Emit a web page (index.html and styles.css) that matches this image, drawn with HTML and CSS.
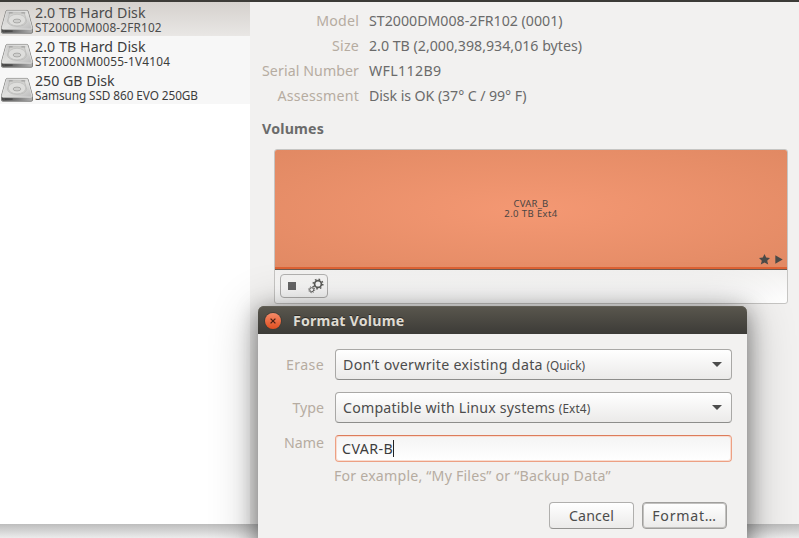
FILE: index.html
```html
<!DOCTYPE html>
<html lang="en">
<head>
<meta charset="utf-8">
<title>Disks</title>
<link rel="stylesheet" href="styles.css">
</head>
<body>
<svg class="defs" width="0" height="0" aria-hidden="true">
  <defs>
    <linearGradient id="lid" x1="0" y1="0" x2="1" y2="1">
      <stop offset="0" stop-color="#c4c4c4"/><stop offset=".5" stop-color="#e0e0de"/><stop offset="1" stop-color="#bababa"/>
    </linearGradient>
    <linearGradient id="front" x1="0" y1="0" x2="1" y2="0">
      <stop offset="0" stop-color="#4a4a4a"/><stop offset=".5" stop-color="#777"/><stop offset="1" stop-color="#b0b0b0"/>
    </linearGradient>
    <symbol id="drive" viewBox="0 0 33 26" preserveAspectRatio="none">
      <path d="M6.500 1.500h20q1 0 1.400 1l4.600 17v4.500q0 1.200-1.200 1.200H1.700Q.5 25.200.5 24v-4.500L5.100 2.500q.4-1 1.400-1z" fill="#999" stroke="#7c7c7a"/>
      <path d="M1 20.500h31v2.700q0 1.500-1.200 1.500H2.200Q1 24.700 1 23.200z" fill="url(#front)"/>
      <path d="M6.800 2h19.400q.9 0 1.200.9L32 20q0 1-1 1H2q-1 0-1-1L5.600 2.900q.3-.9 1.200-.9z" fill="url(#lid)" stroke="#efefed" stroke-width=".7"/>
      <path d="M9 4h15l2.500 9q-2 5-10 5t-10-5z" fill="#d2d2d0" stroke="#b0b0ae" stroke-width=".6"/>
      <ellipse cx="16.500" cy="11.500" rx="9" ry="6" fill="#dededc" stroke="#b6b6b4" stroke-width=".6"/>
      <ellipse cx="16.500" cy="12.500" rx="4" ry="2" fill="#cfcfcd" stroke="#969694" stroke-width=".7"/>
      <path d="M8 4h4M21 4h4" stroke="#8c8c8c" stroke-width=".8"/>
      <path d="M4 23h8" stroke="#3a3a3a"/>
    </symbol>
  </defs>
</svg>
<div class="window">
  <aside class="sidebar">
    <div class="disk selected"><svg class="drive"><use href="#drive"/></svg><div><div class="name"><span class="n1">2.0 TB Hard Disk</span></div><div class="model"><span class="m1">ST2000DM008-2FR102</span></div></div></div>
    <div class="disk"><svg class="drive"><use href="#drive"/></svg><div><div class="name"><span class="n1">2.0 TB Hard Disk</span></div><div class="model"><span class="m2">ST2000NM0055-1V4104</span></div></div></div>
    <div class="disk"><svg class="drive"><use href="#drive"/></svg><div><div class="name"><span class="n3">250 GB Disk</span></div><div class="model"><span class="m3">Samsung SSD 860 EVO 250GB</span></div></div></div>
  </aside>
  <main class="details">
    <dl class="info">
      <dt><span class="l1">Model</span></dt><dd><span class="v1">ST2000DM008-2FR102 (0001)</span></dd>
      <dt><span class="l2">Size</span></dt><dd><span class="v2">2.0 TB (2,000,398,934,016 bytes)</span></dd>
      <dt><span class="l3">Serial Number</span></dt><dd><span class="v3">WFL112B9</span></dd>
      <dt><span class="l4">Assessment</span></dt><dd><span class="v4">Disk is OK (37° C / 99° F)</span></dd>
    </dl>
    <h2><span class="vol-h">Volumes</span></h2>
    <section class="volumes">
      <div class="volume">
        <div class="vol-label"><span class="c1">CVAR_B</span><br><span class="c2">2.0 TB Ext4</span></div>
        <div class="flags">
          <svg width="11" height="11" viewBox="0 0 11 11"><path d="M5.500 0 7.200 3.600 11 4 8.200 6.700 9.200 10.600 5.500 8.600 1.800 10.600 2.800 6.700 0 4 3.800 3.600z"/></svg>
          <svg width="8" height="9" viewBox="0 0 8 9"><path d="M.3.300 7.700 4.500.3 8.700z"/></svg>
        </div>
      </div>
      <div class="toolbar">
        <div class="group">
          <i class="stop"></i>
          <svg width="16" height="16" viewBox="0 0 16 16" fill="none" stroke="#5c5c59">
            <circle cx="10" cy="6" r="3.400" stroke-width="1.700"/>
            <circle cx="10" cy="6" r="4.800" stroke-width="1.500" stroke-dasharray="1.600 2.170"/>
            <circle cx="3.700" cy="11.700" r="2" stroke-width="1"/>
            <circle cx="3.700" cy="11.700" r="3" stroke-width="1" stroke-dasharray="1.100 1.256"/>
          </svg>
        </div>
      </div>
    </section>
  </main>
</div>
<div class="dialog">
  <header class="titlebar">
    <span class="close"><svg width="6" height="6" viewBox="0 0 6 6"><path d="M.6.600 5.400 5.400M5.400.6.600 5.400" stroke="#4a2015" stroke-width="1.300"/></svg></span>
    <span class="title">Format Volume</span>
  </header>
  <div class="form">
    <label><span class="f1">Erase</span></label>
    <div class="combo"><span><span class="o1">Don’t overwrite existing data</span> <small class="s1">(Quick)</small></span><i class="arrow"></i></div>
    <label><span class="f2">Type</span></label>
    <div class="combo"><span><span class="o2">Compatible with Linux systems</span> <small class="s2">(Ext4)</small></span><i class="arrow"></i></div>
    <label class="top"><span class="f3">Name</span></label>
    <div class="entry"><span class="e1">CVAR-B</span><i class="caret"></i></div>
    <p class="hint"><span class="h1">For example, “My Files” or “Backup Data”</span></p>
  </div>
  <div class="actions">
    <button><span class="b1">Cancel</span></button>
    <button class="default"><span class="b2">Format…</span></button>
  </div>
</div>
</body>
</html>
```
FILE: styles.css
```css
* { box-sizing: border-box; }
body {
  margin: 0;
  width: 799px;
  height: 538px;
  overflow: hidden;
  position: relative;
  background: linear-gradient(#bdbdbd, #ececec) 0 524px / 100% 14px no-repeat #ececec;
  font: 14.2px/20px "Noto Sans", "Open Sans", sans-serif;
  color: #4c4c4c;
  white-space: nowrap;
}
.defs { position: absolute; }
.window {
  display: flex;
  height: 524px;
  border-top: 2px solid #3c3b37;
  background: #f2f1f0;
}
.sidebar { width: 250px; background: #fff; }
.disk {
  display: flex;
  gap: 2px;
  height: 34px;
  padding: 2px 0 0 1px;
  background: #f7f7f7;
  color: #3c3c3c;
}
.disk.selected { background: linear-gradient(#d5d1cd, #e9e7e5); color: #4c4c4c; }
.drive { width: 32px; height: 25px; margin-top: 5px; }
.name { height: 17px; line-height: 18px; }
.model { height: 15px; font-size: 11.8px; line-height: 13px; }
.details { flex: 1; padding: 6px 11px 0 12px; color: #6b6b6b; }
.info {
  display: grid;
  grid-template-columns: 97px auto;
  column-gap: 10px;
  grid-auto-rows: 25px;
  line-height: 25px;
  margin: 0;
}
dt { text-align: right; color: #b6aca1; }
dd { margin: 0; }
h2 { margin: 9px 0 0; font-size: 14.2px; line-height: 24px; }
.volumes {
  margin: 8px 0 0 12px;
  height: 155px;
  border: 1px solid #c6c5c3;
  border-radius: 3px;
  background: linear-gradient(#f2f1f0 120px, #fff);
}
.volume {
  height: 120px;
  display: flex;
  flex-direction: column;
  justify-content: center;
  position: relative;
  border-bottom: 1px solid #6d5a50;
  box-shadow: inset 0 -2px #dd6234;
  border-radius: 2px 2px 0 0;
  background: radial-gradient(ellipse farthest-corner, #f49873, #e18963);
}
.vol-label { margin-top: -2px; font-size: 9.5px; line-height: 10px; text-align: center; color: #4a4542; }
.flags {
  position: absolute;
  right: 4px;
  bottom: 4px;
  display: flex;
  align-items: center;
  gap: 5px;
  fill: #4a4a48;
}
.toolbar { padding: 4px 5px; }
.group {
  width: 48px;
  height: 24px;
  display: flex;
  align-items: center;
  gap: 12px;
  padding-left: 7px;
  border: 1px solid #b2b1b0;
  border-radius: 4px;
}
.stop { width: 8px; height: 8px; background: #666; }
.dialog {
  position: absolute;
  left: 258px;
  top: 306px;
  width: 489px;
  height: 250px;
  border-radius: 6px 6px 0 0;
  background: #f2f1f0;
  box-shadow: 0 6px 48px rgba(0,0,0,.3), 0 4px 22px rgba(0,0,0,.4);
}
.titlebar {
  height: 28px;
  display: flex;
  align-items: center;
  gap: 12px;
  padding: 1px 0 0 7px;
  border-radius: 6px 6px 0 0;
  background: linear-gradient(#5a574e, #3c3b37);
  box-shadow: inset 0 1px #625f56;
}
.close {
  width: 16px;
  height: 16px;
  display: grid;
  place-items: center;
  border-radius: 50%;
  background: linear-gradient(#f48a68, #e14f20);
  box-shadow: 0 0 0 1px #403e38;
}
.title { font-weight: bold; color: #dfdbd2; text-shadow: 0 -1px #2c2b27; }
.form {
  display: grid;
  grid-template-columns: 66px 397px;
  grid-template-rows: 31px 31px 27px 20px;
  column-gap: 11px;
  row-gap: 12px;
  padding-top: 15px;
}
label { text-align: right; color: #b6aca1; line-height: 31px; }
label.top { line-height: 16px; }
.combo {
  display: flex;
  align-items: center;
  justify-content: space-between;
  padding: 0 9px 0 7px;
  border: 1px solid #a9a8a6;
  border-bottom-color: #8d8d8b;
  border-radius: 4px;
  background: linear-gradient(#fff, #ebeae9);
}
small { font-size: 11.8px; }
.arrow { border: 5px solid transparent; border-top: 5px solid #4c4c4c; border-bottom: 0; }
.entry {
  display: flex;
  align-items: center;
  padding-left: 6px;
  border: 1px solid #eda083;
  border-top-color: #dc7c5b;
  border-radius: 4px;
  background: linear-gradient(#f4f4f4, #fff);
  box-shadow: inset 0 0 0 1px #f8ddd2;
  color: #3c3c3c;
}
.caret { width: 1px; height: 17px; background: #222; }
.hint { grid-column: 2; margin: -8px 0 0 -1px; color: #b6aca1; }
.actions { display: flex; justify-content: flex-end; gap: 8px; margin-top: 8px; padding-right: 20px; }
button {
  width: 85px;
  height: 27px;
  padding: 0;
  font: inherit;
  color: #4c4c4c;
  border: 1px solid #b0afad;
  border-bottom-color: #949391;
  border-radius: 4px;
  background: linear-gradient(#fff, #ebeae9);
}
button.default { border-color: #a09f9d; box-shadow: inset 0 0 0 1px #c2c1bf; }

/* per-label tracking */
.n1 { letter-spacing: .08px; }
.m1 { letter-spacing: .16px; }
.m2 { letter-spacing: .2px; }
.m3 { letter-spacing: -.08px; }
.l1, .l2, .l4 { letter-spacing: .2px; }
.l3 { letter-spacing: .08px; }
.v3 { letter-spacing: .35px; }
.v4 { letter-spacing: -.08px; }
.vol-h, .title { letter-spacing: .2px; }
.c1 { letter-spacing: .2px; }
.c2 { letter-spacing: .4px; }
.o1 { letter-spacing: .3px; }
.o2, .h1 { letter-spacing: .19px; }
.s2 { letter-spacing: .1px; }
.f1 { letter-spacing: .35px; }
.e1 { letter-spacing: .45px; }
.b1 { letter-spacing: .15px; }
.b2 { letter-spacing: .75px; }
```
